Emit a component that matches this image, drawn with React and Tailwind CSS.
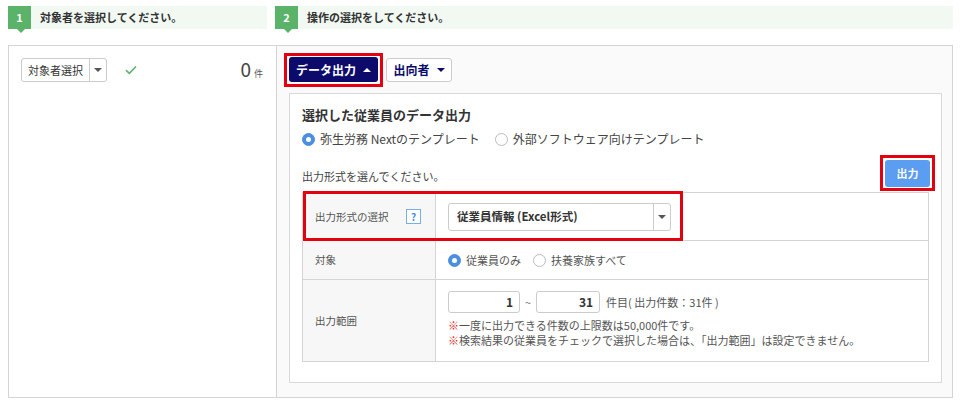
const FONT = { fontFamily: '"Noto Sans CJK JP", "Noto Sans", sans-serif' };

const StepHeader = ({ num, label, className = "" }) => (
  <div className={`relative flex h-[23px] items-center bg-[#f2f9f3] ${className}`}>
    <div className="relative flex h-[23px] w-[23px] shrink-0 items-center justify-center bg-[#5bb36a] text-[11px] font-bold text-white">
      {num}
      <span className="absolute left-[9px] top-[23px] h-0 w-0 border-x-[4px] border-t-[4px] border-x-transparent border-t-[#5bb36a]" />
    </div>
    <span className="ml-[9px] text-[11px] font-bold text-[#333]">{label}</span>
  </div>
);

const Caret = ({ up = false, className = "" }) => (
  <span
    className={`inline-block h-0 w-0 border-x-[4px] border-x-transparent ${
      up ? "border-b-[4px] border-b-current" : "border-t-[4px] border-t-current"
    } ${className}`}
  />
);

const Radio = ({ checked, label, className = "" }) => (
  <label className={`flex items-center gap-[5px] ${className}`}>
    <span
      className={`flex h-[13px] w-[13px] items-center justify-center rounded-full border ${
        checked ? "border-[#4a8fe0] bg-[#4a8fe0]" : "border-[#bbb] bg-white"
      }`}
    >
      {checked && <span className="h-[5px] w-[5px] rounded-full bg-white" />}
    </span>
    <span>{label}</span>
  </label>
);

// red annotation frame drawn over an element
const Mark = ({ className = "" }) => (
  <span className={`pointer-events-none absolute border-[3px] border-[#e3000f] ${className}`} />
);

export default function App() {
  return (
    <div style={FONT} className="h-[404px] w-[960px] overflow-hidden bg-white px-2 pt-[6px] text-[#333]">
      <div className="flex gap-2">
        <StepHeader num="1" label="対象者を選択してください。" className="w-[259px]" />
        <StepHeader num="2" label="操作の選択をしてください。" className="flex-1 mr-[-1px]" />
      </div>

      <div className="mt-4 flex h-[353px] w-[945px] border border-[#d4d4d4]">
        {/* left column */}
        <div className="w-[268px] shrink-0 border-r border-[#d4d4d4] bg-white pl-3 pr-[13px] pt-3">
          <div className="flex items-center">
            <div className="flex h-[24px] items-stretch rounded-[3px] border border-[#ccc] bg-white text-[11px]">
              <span className="flex items-center px-[6px]">対象者選択</span>
              <span className="flex w-[17px] items-center justify-center border-l border-[#ccc] text-[#555]">
                <Caret className="border-x-[3px] border-t-[3px]" />
              </span>
            </div>
            <svg width="12" height="10" viewBox="0 0 12 10" className="ml-[18px]">
              <path d="M1 5.2 L4.3 8.3 L11 1.5" fill="none" stroke="#5fb071" strokeWidth="1.6" />
            </svg>
            <div className="ml-auto flex items-baseline">
              <span className="text-[19px] leading-none text-[#444]">0</span>
              <span className="ml-[3px] text-[9px] text-[#555]">件</span>
            </div>
          </div>
        </div>

        {/* right column */}
        <div className="flex flex-1 flex-col bg-[#fafafa] pb-[14px] pl-3 pr-[10px] pt-[11px]">
          <div className="flex items-center gap-2">
            <div className="relative">
              <button className="flex h-[25px] w-[89px] items-center justify-center gap-[7px] rounded-[3px] bg-[#0c0b6c] text-[12px] font-bold text-white">
                データ出力
                <Caret up className="border-x-[3px] border-b-[3px] text-white" />
              </button>
              <Mark className="-inset-[5px] -top-[4px]" />
            </div>
            <button className="flex h-[24px] w-[66px] items-center justify-center gap-[7px] rounded-[3px] border border-[#ccc] bg-white text-[12px] font-bold text-[#0c0b6c]">
              出向者
              <Caret className="text-[#0c0b6c]" />
            </button>
          </div>

          <div className="mt-[11px] flex-1 border border-[#d9d9d9] bg-white px-3 pt-[11px]">
            <div className="text-[13px] font-bold leading-[20px]">選択した従業員のデータ出力</div>
            <div className="mt-[5px] flex items-center text-[12px] text-[#444]">
              <Radio checked label="弥生労務 Nextのテンプレート" />
              <Radio label="外部ソフトウェア向けテンプレート" className="ml-[15px]" />
            </div>

            <div className="mt-[12px] flex items-end justify-between">
              <span className="mb-[3px] text-[11px] text-[#444]">出力形式を選んでください。</span>
              <div className="relative mr-[-1px]">
                <button className="flex h-[27px] w-[45px] items-center justify-center rounded-[3px] bg-[#5b9df1] text-[11px] font-bold text-white">
                  出力
                </button>
                <Mark className="-inset-[5px] -bottom-[4px]" />
              </div>
            </div>

            <div className="relative mt-[5px] border border-[#d4d4d4] text-[11px]">
              <div className="flex h-[48px] border-b border-[#d4d4d4]">
                <div className="flex w-[133px] shrink-0 items-center justify-between border-r border-[#d4d4d4] bg-[#f7f7f7] pl-3 pr-[14px] text-[10.5px] text-[#555]">
                  <span>出力形式の選択</span>
                  <span className="flex h-[15px] w-[15px] items-center justify-center border border-[#7aaee6] bg-white text-[10px] font-bold text-[#4a8fe0]">?</span>
                </div>
                <div className="flex items-center pl-3">
                  <div className="flex h-[28px] w-[223px] items-stretch rounded-[3px] border border-[#ccc] bg-white">
                    <span className="flex flex-1 items-center pl-[8px] text-[11.5px] font-bold text-[#333]">従業員情報 (Excel形式)</span>
                    <span className="flex w-[17px] items-center justify-center border-l border-[#ccc] text-[#555]">
                      <Caret className="border-x-[3px] border-t-[3px]" />
                    </span>
                  </div>
                </div>
              </div>

              <div className="flex h-[39px] border-b border-[#d4d4d4]">
                <div className="flex w-[133px] shrink-0 items-center border-r border-[#d4d4d4] bg-[#f7f7f7] pl-3 text-[10.5px] text-[#555]">対象</div>
                <div className="flex items-center pl-3 text-[#555]">
                  <Radio checked label="従業員のみ" />
                  <Radio label="扶養家族すべて" className="ml-[12px]" />
                </div>
              </div>

              <div className="flex h-[81px]">
                <div className="flex w-[133px] shrink-0 items-center border-r border-[#d4d4d4] bg-[#f7f7f7] pl-3 text-[10.5px] text-[#555]">出力範囲</div>
                <div className="flex flex-col pl-3 pt-[11px]">
                  <div className="flex items-center">
                    <div className="flex h-[22px] w-[72px] items-center justify-end rounded-[3px] border border-[#ccc] pr-[6px] text-[12px] font-bold">1</div>
                    <span className="mx-[5px] text-[#777]">~</span>
                    <div className="flex h-[22px] w-[64px] items-center justify-end rounded-[3px] border border-[#ccc] pr-[6px] text-[12px] font-bold">31</div>
                    <span className="ml-[6px] text-[11px] text-[#555]">件目( 出力件数：31件 )</span>
                  </div>
                  <div className="mt-[5px] text-[11px] leading-[15px] text-[#555]">
                    <div><span className="text-[#e5261f]">※</span>一度に出力できる件数の上限数は50,000件です。</div>
                    <div><span className="text-[#e5261f]">※</span>検索結果の従業員をチェックで選択した場合は、「出力範囲」は設定できません。</div>
                  </div>
                </div>
              </div>

              <Mark className="left-0 top-[-2px] h-[50px] w-[380px]" />
            </div>
          </div>
        </div>
      </div>
    </div>
  );
}
